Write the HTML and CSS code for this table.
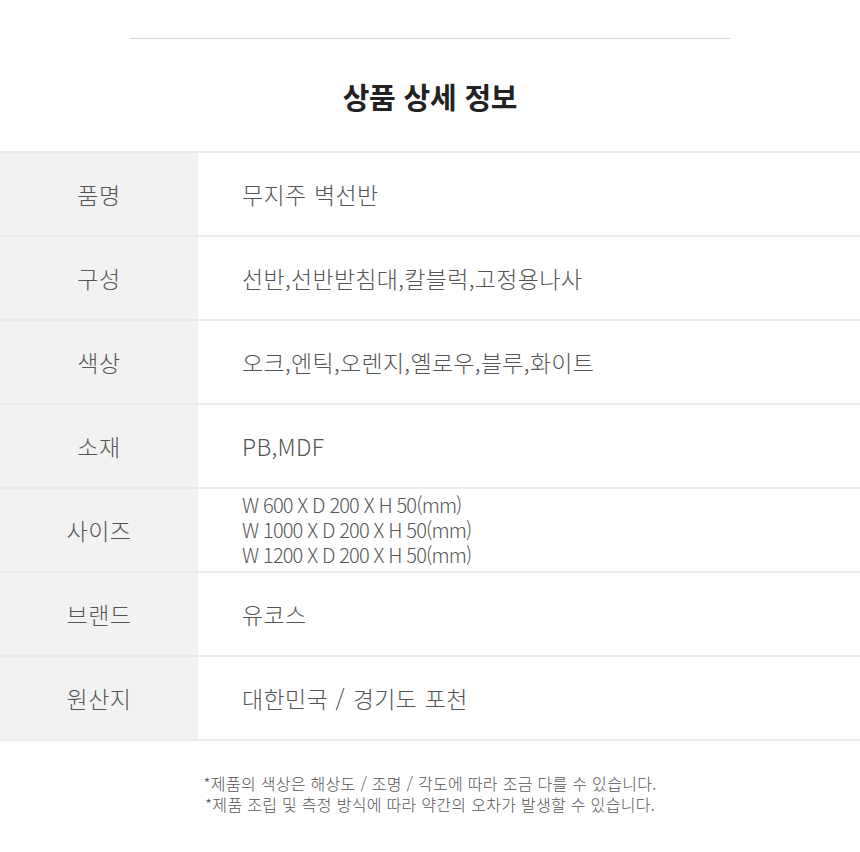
FILE: index.html
```html
<!DOCTYPE html>
<html lang="ko">
<head>
<meta charset="utf-8">
<title>상품 상세 정보</title>
<link rel="stylesheet" href="styles.css">
</head>
<body>
<div class="page">
  <div class="topline"></div>
  <h2 class="title">상품 상세 정보</h2>
  <div class="spec">
    <div class="row"><div class="label">품명</div><div class="value">무지주 벽선반</div></div>
    <div class="row"><div class="label">구성</div><div class="value">선반,선반받침대,칼블럭,고정용나사</div></div>
    <div class="row"><div class="label">색상</div><div class="value">오크,엔틱,오렌지,옐로우,블루,화이트</div></div>
    <div class="row"><div class="label">소재</div><div class="value">PB,MDF</div></div>
    <div class="row"><div class="label">사이즈</div><div class="value value-sizes">W 600 X D 200 X H 50(mm)<br>W 1000 X D 200 X H 50(mm)<br>W 1200 X D 200 X H 50(mm)</div></div>
    <div class="row"><div class="label">브랜드</div><div class="value">유코스</div></div>
    <div class="row"><div class="label">원산지</div><div class="value">대한민국 / 경기도 포천</div></div>
  </div>
  <p class="note">*제품의 색상은 해상도 / 조명 / 각도에 따라 조금 다를 수 있습니다.<br>*제품 조립 및 측정 방식에 따라 약간의 오차가 발생할 수 있습니다.</p>
</div>
</body>
</html>
```

FILE: styles.css
```css
html, body {
  margin: 0;
  padding: 0;
  background: #fff;
}
body {
  font-family: "Noto Sans CJK KR", "Noto Sans", sans-serif;
  color: #555;
}
.page {
  padding-top: 38px;
}
.topline {
  width: 600px;
  margin: 0 auto;
  border-top: 1px solid #d6d6d6;
}
.title {
  margin: 40px 0 37px;
  text-align: center;
  font-size: 29px;
  line-height: 35px;
  font-weight: 700;
  color: #222;
  letter-spacing: -0.2px;
}
.spec {
  border-top: 2px solid #ebebeb;
}
.row {
  display: flex;
  height: 82px;
  border-bottom: 2px solid #ebebeb;
}
.label {
  width: 198px;
  flex: 0 0 198px;
  background: #f2f2f2;
  display: flex;
  align-items: center;
  justify-content: center;
  font-size: 23px;
  font-weight: 300;
  letter-spacing: 0.5px;
  color: #555;
}
.value {
  flex: 1;
  display: flex;
  align-items: center;
  padding-left: 44px;
  font-size: 23px;
  font-weight: 300;
  letter-spacing: 0.3px;
  word-spacing: 1px;
  color: #555;
}
.value-sizes {
  display: block;
  align-self: center;
  font-size: 20px;
  line-height: 25px;
  letter-spacing: -0.85px;
  word-spacing: 0;
  padding-bottom: 2px;
}
.note {
  margin: 32px 0 0;
  text-align: center;
  font-size: 16px;
  font-weight: 300;
  line-height: 21px;
  letter-spacing: 0.3px;
  color: #555;
}
```
